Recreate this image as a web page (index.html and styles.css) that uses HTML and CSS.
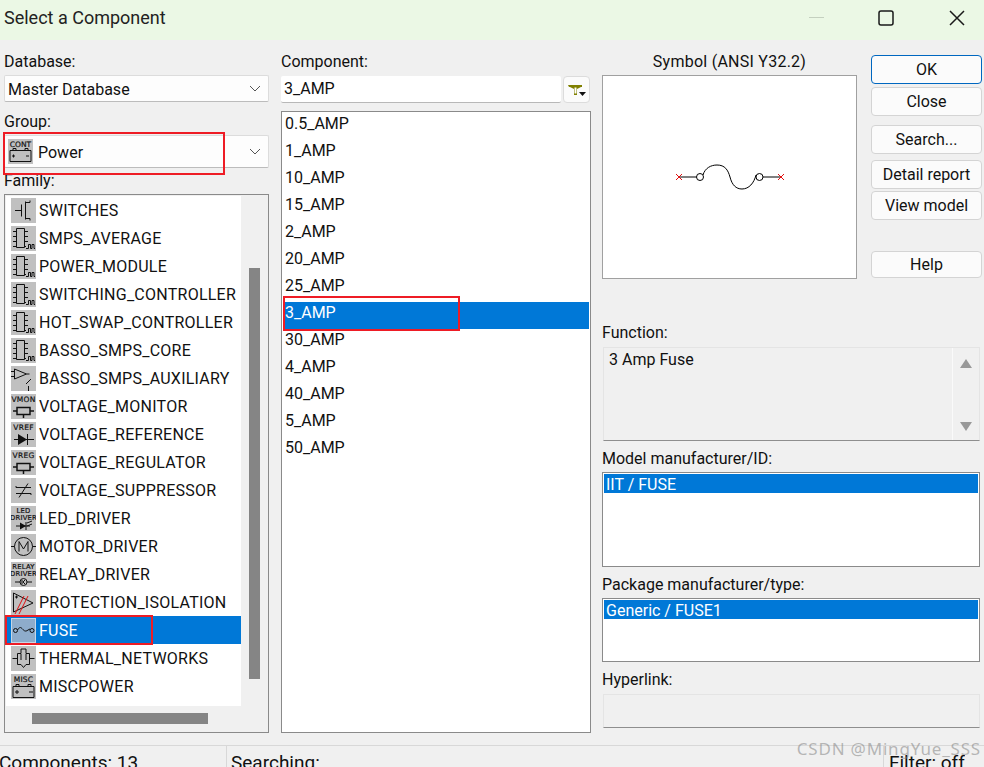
FILE: index.html
```html
<!DOCTYPE html>
<html lang="en">
<head>
<meta charset="utf-8">
<title>Select a Component</title>
<link rel="stylesheet" href="styles.css">
</head>
<body>
<svg class="defs" width="0" height="0" aria-hidden="true">
  <defs>
    <symbol id="chip" viewBox="0 0 25 25"><path d="M5.500 2.500h8v19h-8zM2 5.500h3.500M2 10.500h3.500M2 15.500h3.500M2 20.500h3.500M13.500 5.500H17M13.500 10.500H17M13.500 15.500H17M13.500 20.500H15M15 22.500h2.500v-4h2v4h1.500v-4h2v4h1" class="ln"/></symbol>
    <symbol id="sw" viewBox="0 0 25 25"><path d="M4 12.500h6.500M10.500 6.500v12M14.500 3.500v18M14.500 4.500h4.500v-2M14.500 20.500h4.500v2" class="ln"/></symbol>
    <symbol id="amp" viewBox="0 0 25 25"><path d="M3.500 3v10l12-5zM0 5.500h3.500M0 10.500h3.500M15.500 8h3M15 18l5-5M17.500 20v5" class="ln"/></symbol>
    <symbol id="vmon" viewBox="0 0 25 25"><text x="12.500" y="8" class="lab">VMON</text><path d="M6 13.500h13v7H6zM2 17h4M19 17h4M12.500 20.500V24" class="ln2"/></symbol>
    <symbol id="vref" viewBox="0 0 25 25"><text x="12.500" y="8" class="lab">VREF</text><path d="M7 12l9 5.500-9 5.500z" class="fil"/><path d="M3 17.500h20M16.500 12v11" class="ln"/></symbol>
    <symbol id="vreg" viewBox="0 0 25 25"><text x="12.500" y="8" class="lab">VREG</text><path d="M6 13.500h13v7H6zM2 17h4M19 17h4M12.500 20.500V24" class="ln2"/></symbol>
    <symbol id="supp" viewBox="0 0 25 25"><path d="M5 9.500h15M5 15.500h15M8 19.500l9-14M5 9.500v-1.500M20 15.500v1.500" class="ln"/></symbol>
    <symbol id="led" viewBox="0 0 25 25"><text x="12.500" y="7" class="lab lab-sm">LED</text><text x="12.500" y="14" class="lab lab-sm">DRIVER</text><path d="M9 16.500l6 3.500-6 3.500z" class="fil"/><path d="M5 20h14M15 16v8M16 17l5-2M16 20l5-2" class="ln"/></symbol>
    <symbol id="motor" viewBox="0 0 25 25"><circle cx="12.500" cy="12.500" r="9" class="ln"/><path d="M0 12.500h3.500M21.500 12.500H25M8 17.500v-10l4.500 7.500 4.500-7.500v10" class="ln"/></symbol>
    <symbol id="relay" viewBox="0 0 25 25"><text x="12.500" y="7" class="lab lab-sm">RELAY</text><text x="12.500" y="14" class="lab lab-sm">DRIVER</text><circle cx="12.500" cy="20" r="3.500" class="ln"/><path d="M4 20h5M16 20h5M11 18v4M14 18l-2 2 2 2" class="ln"/></symbol>
    <symbol id="prot" viewBox="0 0 25 25"><path d="M2.500 3v19M2.500 3L22 13 2.500 22" class="ln"/><path d="M4 7h3M5.500 5.500v3" class="ln"/><path d="M4 24l9-18M8 24l9-18" class="red"/></symbol>
    <symbol id="fuse" viewBox="0 0 25 25"><circle cx="4.500" cy="12.500" r="2" class="ln"/><circle cx="21" cy="12.500" r="2" class="ln"/><path d="M6.500 12c2-3 3-3 4.500-1.500s3 4 6 1.500l2-1" class="ln"/></symbol>
    <symbol id="therm" viewBox="0 0 25 25"><path d="M6.500 7.500h3.500V3h5v4.500h3.500v11H15l-2.500 3-2.500-3H6.500zM1.500 12.500h5M18.500 12.500h5M10 8v6M15 8v6" class="ln"/></symbol>
    <symbol id="misc" viewBox="0 0 25 25"><text x="12.500" y="8" class="lab">MISC</text><path d="M2 12.500h21v11H2zM5 12.500v-2h3v2M17 12.500v-2h3v2M4 18h4M6 16v4M18 18h4" class="ln"/></symbol>
    <symbol id="cont" viewBox="0 0 25 25"><text x="12.500" y="7.500" class="lab">CONT</text><path d="M2 11.500h21v11H2zM5 11.500v-2h3v2M17 11.500v-2h3v2M4 17h3M5.500 15.500v3M18 17h3" class="ln"/></symbol>
  </defs>
</svg>

<div class="dialog">
  <header class="title">
    <span class="title-text">Select a Component</span>
    <span class="win-btns">
      <span class="win-min"></span>
      <svg class="win-ico win-max" viewBox="0 0 16 16"><rect x="1" y="1" width="14" height="14" rx="2" class="win-ln"/></svg>
      <svg class="win-ico" viewBox="0 0 16 16"><path d="M1 1l14 14M15 1L1 15" class="win-ln"/></svg>
    </span>
  </header>

  <main class="main">
    <section class="col-left">
      <label class="lbl lbl-db">Database:</label>
      <div class="combo combo-db">
        <span class="combo-val">Master Database</span>
        <svg class="chev" viewBox="0 0 12 7"><path d="M1 1l5 5 5-5"/></svg>
      </div>
      <label class="lbl lbl-group">Group:</label>
      <div class="combo combo-group">
        <svg class="ic ic-group"><use href="#cont"/></svg>
        <span class="combo-val">Power</span>
        <svg class="chev" viewBox="0 0 12 7"><path d="M1 1l5 5 5-5"/></svg>
        <span class="mark mark-group"></span>
      </div>
      <label class="lbl lbl-family">Family:</label>
      <div class="family">
        <div class="family-body">
          <ul class="family-list">
            <li class="fam"><svg class="ic"><use href="#sw"/></svg>SWITCHES</li>
            <li class="fam"><svg class="ic"><use href="#chip"/></svg>SMPS_AVERAGE</li>
            <li class="fam"><svg class="ic"><use href="#chip"/></svg>POWER_MODULE</li>
            <li class="fam"><svg class="ic"><use href="#chip"/></svg>SWITCHING_CONTROLLER</li>
            <li class="fam"><svg class="ic"><use href="#chip"/></svg>HOT_SWAP_CONTROLLER</li>
            <li class="fam"><svg class="ic"><use href="#chip"/></svg>BASSO_SMPS_CORE</li>
            <li class="fam"><svg class="ic"><use href="#amp"/></svg>BASSO_SMPS_AUXILIARY</li>
            <li class="fam"><svg class="ic"><use href="#vmon"/></svg>VOLTAGE_MONITOR</li>
            <li class="fam"><svg class="ic"><use href="#vref"/></svg>VOLTAGE_REFERENCE</li>
            <li class="fam"><svg class="ic"><use href="#vreg"/></svg>VOLTAGE_REGULATOR</li>
            <li class="fam"><svg class="ic"><use href="#supp"/></svg>VOLTAGE_SUPPRESSOR</li>
            <li class="fam"><svg class="ic"><use href="#led"/></svg>LED_DRIVER</li>
            <li class="fam"><svg class="ic"><use href="#motor"/></svg>MOTOR_DRIVER</li>
            <li class="fam"><svg class="ic"><use href="#relay"/></svg>RELAY_DRIVER</li>
            <li class="fam"><svg class="ic"><use href="#prot"/></svg>PROTECTION_ISOLATION</li>
            <li class="fam fam-sel"><svg class="ic"><use href="#fuse"/></svg>FUSE<span class="mark mark-fuse"></span></li>
            <li class="fam"><svg class="ic"><use href="#therm"/></svg>THERMAL_NETWORKS</li>
            <li class="fam"><svg class="ic"><use href="#misc"/></svg>MISCPOWER</li>
          </ul>
          <div class="vscroll"><span class="vthumb"></span></div>
        </div>
        <div class="hscroll"><span class="hthumb"></span></div>
      </div>
    </section>

    <section class="col-mid">
      <label class="lbl lbl-comp">Component:</label>
      <div class="search-row">
        <div class="input">3_AMP</div>
        <button class="filter" type="button" aria-label="Filter">
          <svg class="filter-ico" viewBox="0 0 20 14"><path d="M1 2h14v2h-1l-4 2v6H7V6L3 4H2z" fill="#808000"/><path d="M7.500 4.500h2v6h-2z" fill="#fff"/><path d="M12 9h7l-3.500 4z" fill="#111"/></svg>
        </button>
      </div>
      <ul class="comp-list">
        <li class="comp">0.5_AMP</li>
        <li class="comp">1_AMP</li>
        <li class="comp">10_AMP</li>
        <li class="comp">15_AMP</li>
        <li class="comp">2_AMP</li>
        <li class="comp">20_AMP</li>
        <li class="comp">25_AMP</li>
        <li class="comp comp-sel">3_AMP<span class="mark mark-comp"></span></li>
        <li class="comp">30_AMP</li>
        <li class="comp">4_AMP</li>
        <li class="comp">40_AMP</li>
        <li class="comp">5_AMP</li>
        <li class="comp">50_AMP</li>
      </ul>
    </section>

    <section class="col-right">
      <div class="top-row">
        <div class="symbol-col">
          <div class="symbol-head">Symbol (ANSI Y32.2)</div>
          <div class="symbol-box">
            <svg class="symbol" viewBox="0 0 110 30" width="110" height="30">
              <path d="M4 15h17.500M88 15h18M28 13C30 6 36 3 42 3 50 3 53 8 55 15 57 23 61 27 67 27 74 27 79 21 81 13" class="sym-ln"/>
              <circle cx="25" cy="15" r="3.500" class="sym-ln"/>
              <circle cx="84.500" cy="15" r="3.500" class="sym-ln"/>
              <path d="M1 12l6 6M7 12l-6 6M109 12l-6 6M103 12l6 6" class="sym-x"/>
            </svg>
          </div>
        </div>
        <div class="btns">
          <button class="btn btn-ok" type="button">OK</button>
          <button class="btn btn-close" type="button">Close</button>
          <button class="btn btn-search" type="button">Search...</button>
          <button class="btn btn-detail" type="button">Detail report</button>
          <button class="btn btn-view" type="button">View model</button>
          <button class="btn btn-help" type="button">Help</button>
        </div>
      </div>

      <label class="lbl lbl-func">Function:</label>
      <div class="func">
        <div class="func-text">3 Amp Fuse</div>
        <div class="func-scroll">
          <svg class="arr" viewBox="0 0 12 9"><path d="M6 0l6 9H0z"/></svg>
          <svg class="arr" viewBox="0 0 12 9"><path d="M0 0h12L6 9z"/></svg>
        </div>
      </div>
      <label class="lbl lbl-model">Model manufacturer/ID:</label>
      <div class="pick pick-model"><div class="pick-sel pick-sel-model">IIT / FUSE</div></div>
      <label class="lbl lbl-pack">Package manufacturer/type:</label>
      <div class="pick pick-pack"><div class="pick-sel">Generic / FUSE1</div></div>
      <label class="lbl lbl-link">Hyperlink:</label>
      <div class="link-box"></div>
    </section>
  </main>

  <footer class="status">
    <span class="st st-count">Components: 13</span>
    <span class="st st-search">Searching:</span>
    <span class="st st-filter">Filter: off</span>
    <span class="watermark">CSDN @MingYue_SSS</span>
  </footer>
</div>
</body>
</html>
```

FILE: styles.css
```css
* { box-sizing: border-box; }
html, body { margin: 0; padding: 0; }
body {
  width: 984px;
  height: 767px;
  overflow: hidden;
  background: #f0f0f0;
  color: #111;
  font-family: Roboto, "Noto Sans", sans-serif;
  font-size: 16px;
}
.defs { position: absolute; }
ul { list-style: none; margin: 0; padding: 0; }
button { font: inherit; color: inherit; }

.ln { fill: none; stroke: #111; stroke-width: 1; }
.ln2 { fill: none; stroke: #111; stroke-width: 1.500; }
.fil { fill: #111; }
.red { fill: none; stroke: #e01010; stroke-width: 1; }
.lab { font-family: "DejaVu Sans", sans-serif; font-size: 7.500px; fill: #111; stroke: #111; stroke-width: 0.200px; text-anchor: middle; }
.lab-sm { font-size: 6.800px; }

.dialog { width: 984px; height: 767px; display: flex; flex-direction: column; }

.title {
  height: 40px;
  flex: none;
  background: #ebf8e5;
  display: flex;
  align-items: center;
  justify-content: space-between;
  padding: 0 19px 5px 4px;
}
.title-text { font-size: 18px; color: #222; }
.win-btns { display: flex; align-items: center; }
.win-min { width: 15px; height: 1px; background: #c4d0bf; margin-right: 54px; }
.win-ico { width: 16px; height: 16px; }
.win-max { margin-right: 55px; }
.win-ln { fill: none; stroke: #1a1a1a; stroke-width: 1.500; }

.main {
  height: 705px;
  flex: none;
  display: flex;
  padding: 12px 0 0 4px;
}
.lbl { display: block; line-height: 19px; }

/* left */
.col-left { width: 265px; flex: none; }
.lbl-db { height: 23px; }
.combo {
  position: relative;
  display: flex;
  align-items: center;
  background: #fdfdfd;
  border: 1px solid #dcdcdc;
  border-bottom-color: #bcbcbc;
  border-radius: 2px;
  padding-left: 3px;
}
.combo-db { height: 27px; }
.combo-val { flex: 1; padding-top: 2px; }
.chev { width: 12px; height: 7px; margin-right: 7px; fill: none; stroke: #555; stroke-width: 1; }
.lbl-group { height: 33px; padding-top: 10px; }
.combo-group { height: 33px; }
.ic { width: 25px; height: 25px; flex: none; background: #c0c0c0; margin-right: 3px; }
.ic-group { margin-right: 5px; }
.mark { position: absolute; border: 2px solid #ee1c25; pointer-events: none; }
.mark-group { left: -2px; top: -4px; width: 222px; height: 43px; }
.lbl-family { height: 26px; padding-top: 3px; }
.family {
  height: 539px;
  border: 1px solid #8a8a8a;
  background: #f0f0f0;
  padding: 1px;
}
.family-body { height: 510px; display: flex; }
.family-list { width: 235px; height: 510px; background: #fff; flex: none; }
.fam {
  position: relative;
  height: 28px;
  display: flex;
  align-items: center;
  padding-left: 5px;
  white-space: nowrap;
  letter-spacing: 0.250px;
}
.fam-sel { background: #0078d7; color: #fff; }
.fam-sel .ic { background: #8eaccb; outline: 1px solid #c5d6e6; outline-offset: -1px; }
.mark-fuse { left: -1px; top: -1px; width: 148px; height: 30px; }
.vscroll { flex: 1; padding: 72px 0 0 8px; }
.vthumb { display: block; width: 11px; height: 411px; background: #858585; }
.hscroll { padding: 7px 0 0 26px; }
.hthumb { display: block; width: 176px; height: 11px; background: #858585; }

/* middle */
.col-mid { width: 310px; flex: none; margin-left: 12px; }
.lbl-comp { height: 24px; }
.search-row { display: flex; height: 27px; }
.input {
  width: 280px;
  background: #fff;
  border-bottom: 1px solid #b8b8b8;
  border-radius: 2px;
  padding-left: 3px;
  line-height: 25px;
}
.filter {
  width: 27px;
  height: 27px;
  margin-left: 2px;
  padding: 0;
  background: #fbfbfb;
  border: 1px solid #dcdcdc;
  border-radius: 4px;
  display: flex;
  align-items: center;
  justify-content: center;
}
.filter-ico { width: 20px; height: 14px; }
.comp-list {
  height: 622px;
  margin-top: 8px;
  background: #fff;
  border: 1px solid #8a8a8a;
  padding: 1px;
}
.comp {
  position: relative;
  height: 27px;
  line-height: 21px;
  padding-left: 2px;
}
.comp-sel { background: #0078d7; color: #fff; }
.mark-comp { left: 0; top: -6px; width: 177px; height: 35px; }

/* right */
.col-right { width: 380px; flex: none; margin-left: 11px; }
.top-row { display: flex; height: 227px; }
.symbol-col { width: 255px; flex: none; }
.symbol-head { height: 23px; text-align: center; line-height: 19px; letter-spacing: 0.250px; }
.symbol-box {
  height: 204px;
  background: #fff;
  border: 1px solid #a0a0a0;
  display: flex;
  align-items: center;
  justify-content: center;
}
.symbol { margin-left: 1px; }
.sym-ln { fill: none; stroke: #000; stroke-width: 1; }
.sym-x { fill: none; stroke: #e01010; stroke-width: 1; }
.btns { width: 111px; flex: none; margin-left: 14px; padding-top: 3px; display: flex; flex-direction: column; }
.btn {
  width: 111px;
  height: 29px;
  padding: 0;
  background: #fbfbfb;
  border: 1px solid #d4d4d4;
  border-radius: 4px;
  line-height: 20px;
}
.btn-ok { border-color: #0067c0; }
.btn-close { margin-top: 3px; }
.btn-search { margin-top: 9px; }
.btn-detail { margin-top: 6px; }
.btn-view { margin-top: 2px; }
.btn-help { margin-top: 31px; height: 27px; }

.lbl-func { height: 68px; padding-top: 44px; }
.func {
  width: 377px;
  height: 94px;
  margin-left: 1px;
  display: flex;
  border: 1px solid #e4e4e4;
  border-bottom: 1px solid #8e8e8e;
}
.func-text { flex: 1; padding-left: 5px; line-height: 24px; }
.func-scroll {
  width: 27px;
  border-left: 1px solid #fafafa;
  display: flex;
  flex-direction: column;
  justify-content: space-between;
  align-items: center;
  padding: 11px 0 9px;
}
.arr { width: 12px; height: 9px; fill: #999; }
.lbl-model { height: 31px; padding-top: 8px; }
.pick { background: #fff; border: 1px solid #8a8a8a; padding: 1px; width: 378px; }
.pick-model { height: 95px; }
.pick-pack { height: 64px; }
.pick-sel {
  height: 19px;
  line-height: 22px;
  background: #0078d7;
  color: #fff;
  padding-left: 2px;
  overflow: hidden;
}
.lbl-pack { height: 31px; padding-top: 8px; }
.lbl-link { height: 32px; padding-top: 8px; }
.link-box {
  width: 377px;
  height: 34px;
  margin-left: 1px;
  border: 1px solid #e4e4e4;
  border-bottom: 1px solid #8e8e8e;
}

/* status */
.status {
  position: relative;
  height: 22px;
  flex: none;
  border-top: 1px solid #d8d8d8;
  display: flex;
  line-height: 22px;
  font-size: 19px;
}
.st { display: block; padding-top: 6px; white-space: nowrap; overflow: hidden; height: 21px; }
.st-count { width: 227px; text-indent: -1px; border-right: 1px solid #d8d8d8; }
.st-search { width: 657px; padding-left: 4px; border-right: 1px solid #d8d8d8; }
.st-filter { padding-left: 5px; }
.watermark {
  position: absolute;
  right: 3px;
  top: -9px;
  font-family: "Noto Sans", sans-serif;
  font-size: 17px;
  letter-spacing: 0.800px;
  line-height: 24px;
  color: rgba(130, 130, 130, 0.55);
}
```
